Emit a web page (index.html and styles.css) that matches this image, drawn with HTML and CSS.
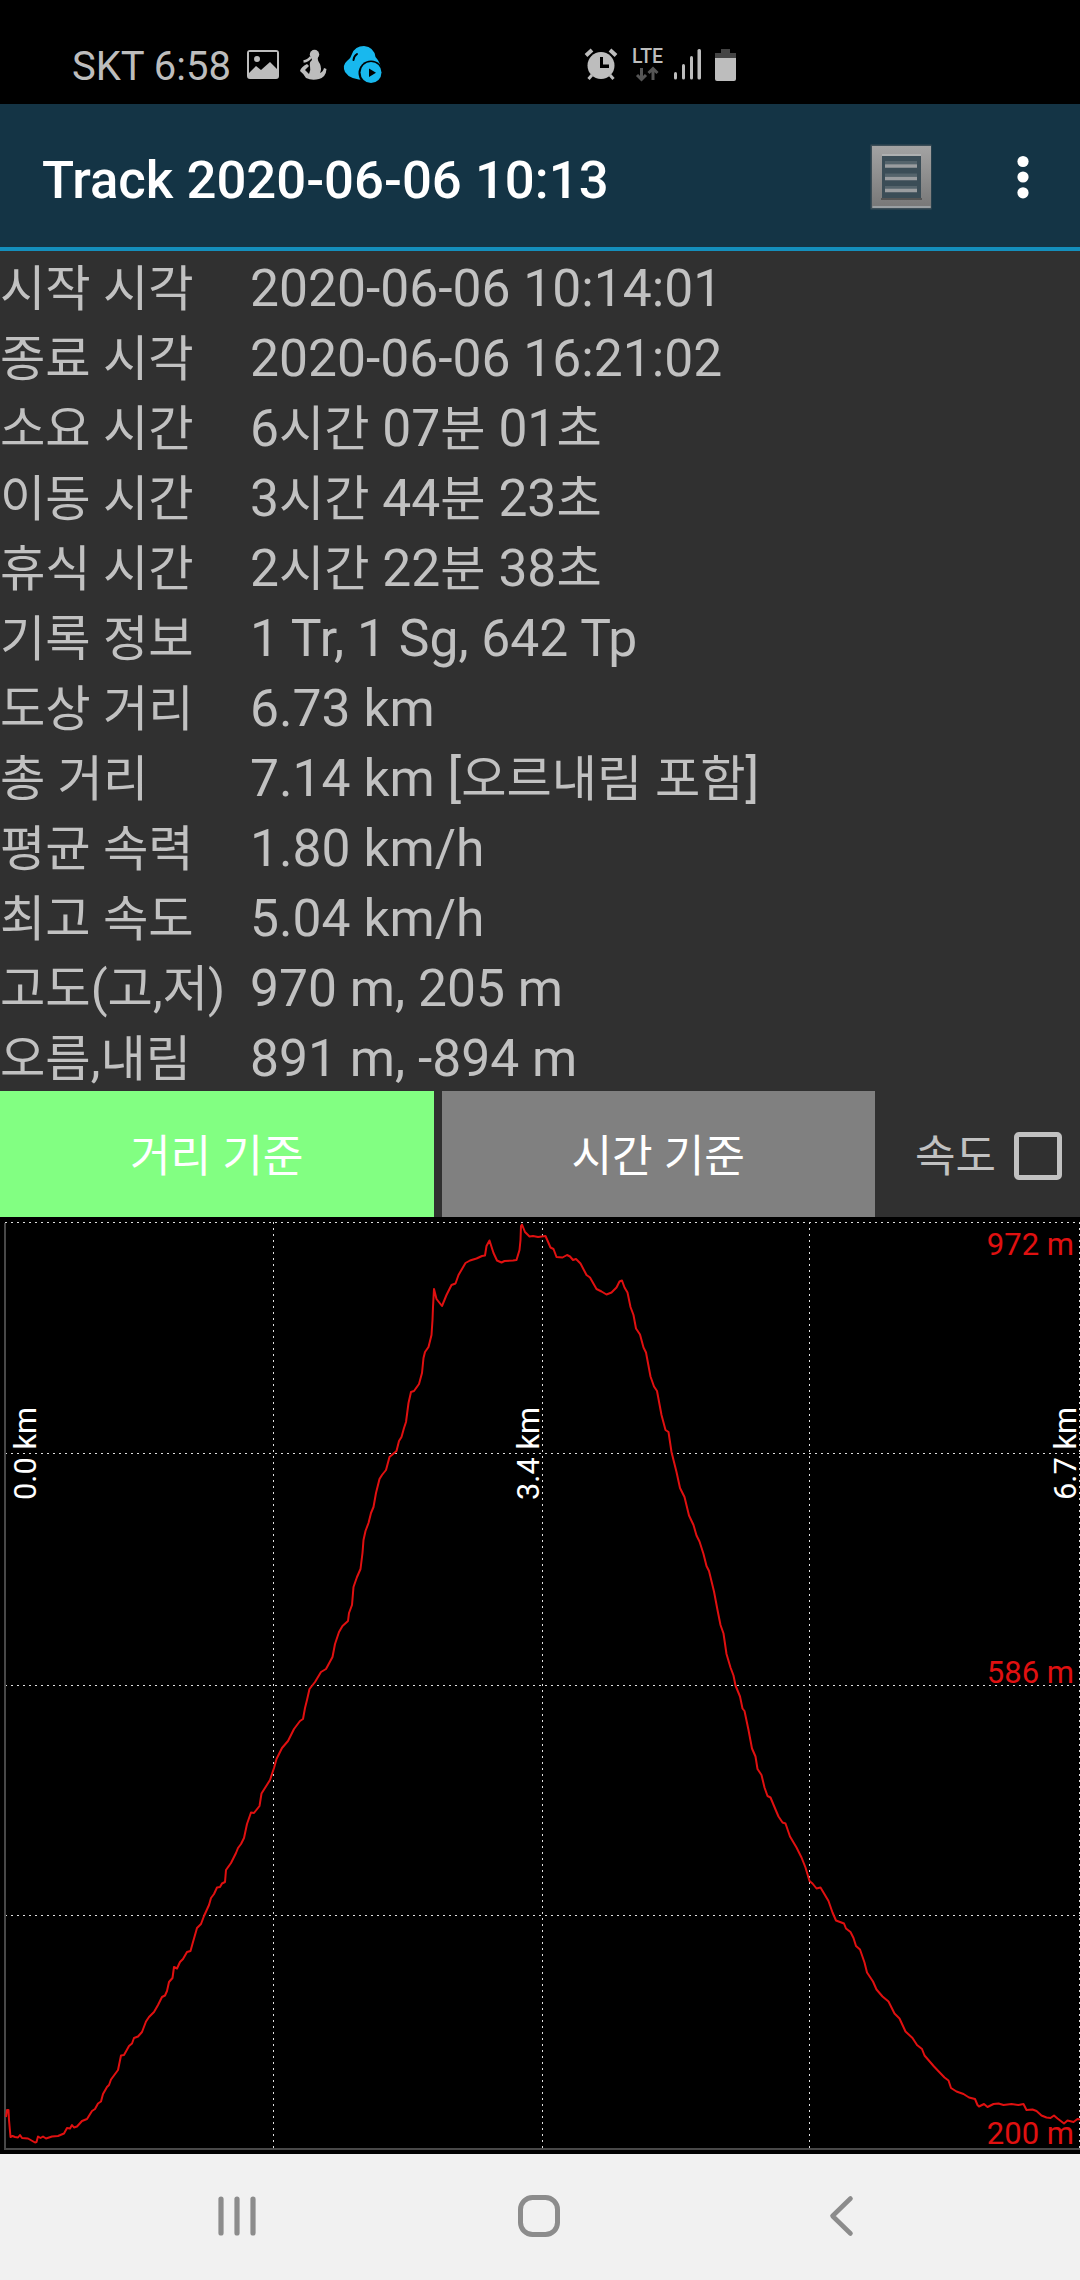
FILE: index.html
```html
<!DOCTYPE html>
<html lang="ko">
<head>
<meta charset="utf-8">
<title>Track 2020-06-06 10:13</title>
<link rel="stylesheet" href="styles.css">
</head>
<body>
<div class="screen">
  <header class="status">
    <span class="carrier">SKT 6:58</span>
    <svg class="notices" viewBox="244 44 140 42" width="140" height="42">
      <path fill="#bdbdbd" fill-rule="evenodd" d="M250 50H276Q279 50 279 53V76Q279 79 276 79H250Q247 79 247 76V53Q247 50 250 50ZM249 52V73L256 66L261 70L270 62L277 69V52ZM257 56A3 3 0 1 1 257 62A3 3 0 0 1 257 56Z"/>
      <circle cx="314.500" cy="54.500" r="4.700" fill="#bdbdbd"/>
      <path fill="#bdbdbd" d="M311 57L318 57Q317 60 320 64Q322 69 320 73Q323 72 324 68L326.500 69Q326 77 319 79Q312 81 306 78Q304 74 300 71Q301 67 307 64L309 66L305 70L309 74Q311 70 310 66Q309 62 312 60Z"/>
      <path fill="none" stroke="#bdbdbd" stroke-width="2.600" d="M311 57Q308 61 303.500 61.500"/>
      <path fill="#18b8ee" d="M364 46Q374 47 375.500 57Q380 62 381 68Q376 80 366 80Q350 80 345 72Q342 65 347 61Q351 58 352 54Q355 46 364 46Z"/>
      <path fill="none" stroke="#000" stroke-width="2" stroke-linecap="round" d="M353.500 60Q354 56 357 54"/>
      <circle cx="371" cy="73" r="12.500" fill="#000"/>
      <circle cx="371" cy="72.500" r="10.500" fill="#18b8ee"/>
      <path d="M369 68.500L376 72.700L369 77Z"/>
    </svg>
    <svg class="signals" viewBox="584 44 154 42" width="154" height="42">
      <g fill="#bdbdbd">
        <circle cx="601" cy="65.500" r="13.500"/>
        <path d="M600 57H603V64.500H609V68H600Z" fill="#000"/>
        <path stroke="#bdbdbd" stroke-width="4" d="M586 55.500L592 50M610 50L616 55.500"/>
        <path stroke="#bdbdbd" stroke-width="3" d="M592 75L588.500 79M610 75L613.500 79"/>
        <text class="lte" x="632" y="63" textLength="31" lengthAdjust="spacingAndGlyphs">LTE</text>
        <g fill="none" stroke="#555" stroke-width="3"><path d="M641.500 68V79M637 75L641.500 79.500L646 75M653 80V69M648.500 73L653 68.500L657.500 73"/></g>
        <rect x="674" y="72" width="3" height="7.500" rx="1.500"/><rect x="682" y="64" width="3" height="15.500" rx="1.500"/><rect x="690" y="56" width="3" height="23.500" rx="1.500"/><rect x="697.500" y="49" width="3.500" height="30.500" rx="1.500"/>
        <path fill="#444" d="M721 49H730V53H736V58H715V53H721Z"/><path d="M715 58H736V79Q736 81 734 81H717Q715 81 715 79Z"/>
      </g>
    </svg>
  </header>

  <nav class="appbar">
    <h1 class="title">Track 2020-06-06 10:13</h1>
    <svg class="list-icon" viewBox="868 142 66 70" width="66" height="70">
      <defs><linearGradient id="metal" x1="0" y1="0" x2="0" y2="1"><stop offset="0" stop-color="#a3a3a3"/><stop offset="1" stop-color="#777"/></linearGradient></defs>
      <rect x="870.500" y="144.500" width="61" height="65" fill="#3b4d57"/>
      <path fill="url(#metal)" fill-rule="evenodd" d="M872 146H931V208H872ZM882 156V198H921V156Z"/>
      <path d="M872.500 207H930.500" stroke="#a4adb1" stroke-width="1.500"/>
      <path d="M881 199H922" stroke="#555" stroke-width="2"/>
      <path d="M882 155H921" stroke="#c0c3c4" stroke-width="1"/>
      <path d="M885 162.500H917M885 175H917M885 187.500H917" stroke="#55646c" stroke-width="3"/>
      <path d="M885 166H917M885 178.500H917M885 190.500H917" stroke="#9a9da0" stroke-width="3.500"/>
    </svg>
    <svg class="more" viewBox="0 0 12 44" width="12" height="44"><g fill="#fff"><circle cx="6" cy="6.500" r="5.600"/><circle cx="6" cy="22" r="5.600"/><circle cx="6" cy="37.800" r="5.600"/></g></svg>
  </nav>

  <dl class="stats">
    <div class="row"><dt>시작 시각</dt><dd>2020-06-06 10:14:01</dd></div>
    <div class="row"><dt>종료 시각</dt><dd>2020-06-06 16:21:02</dd></div>
    <div class="row"><dt>소요 시간</dt><dd>6<span class="ko">시간</span> 07<span class="ko">분</span> 01<span class="ko">초</span></dd></div>
    <div class="row"><dt>이동 시간</dt><dd>3<span class="ko">시간</span> 44<span class="ko">분</span> 23<span class="ko">초</span></dd></div>
    <div class="row"><dt>휴식 시간</dt><dd>2<span class="ko">시간</span> 22<span class="ko">분</span> 38<span class="ko">초</span></dd></div>
    <div class="row"><dt>기록 정보</dt><dd>1 Tr, 1 Sg, 642 Tp</dd></div>
    <div class="row"><dt>도상 거리</dt><dd>6.73 km</dd></div>
    <div class="row"><dt>총 거리</dt><dd>7.14 km [<span class="ko">오르내림</span> <span class="ko">포함</span>]</dd></div>
    <div class="row"><dt>평균 속력</dt><dd>1.80 km/h</dd></div>
    <div class="row"><dt>최고 속도</dt><dd>5.04 km/h</dd></div>
    <div class="row"><dt>고도(고,저)</dt><dd>970 m, 205 m</dd></div>
    <div class="row"><dt>오름,내림</dt><dd>891 m, -894 m</dd></div>
  </dl>

  <div class="controls">
    <button class="mode mode-active">거리 기준</button>
    <button class="mode">시간 기준</button>
    <label class="speed"><span class="speed-text">속도</span><span class="box"></span></label>
  </div>

  <svg class="chart" viewBox="0 1217 1080 937" width="1080" height="937">
    <g class="grid">
      <path d="M5 1222.500H1080M5 1453.500H1080M5 1685.500H1080M5 1915.500H1080"/>
      <path d="M273.500 1222V2148M542.500 1222V2148M809.500 1222V2148M1079.500 1222V2148"/>
    </g>
    <path class="axis" d="M5 1223V2149H1080"/>
    <polyline class="profile" points="6,2117 7,2110 8.500,2110 9,2120 10.500,2137 12.500,2136 15,2137 18,2137.500 20,2135 22,2138 28,2138.500 35,2142.500 36.500,2142 38,2136.500 40.500,2138 43,2136.500 46,2138.500 52,2136.500 58,2136 64,2133.500 67,2128 70,2128.500 72,2125 74,2127.500 77,2126.500 82,2121 87,2119 92,2111 95,2109 98,2103.500 101,2101.500 103,2094 107,2087 109,2085 111,2079.500 118,2070 121,2055.500 124,2055 129,2046 132,2043.500 134,2038 138,2036.500 142,2032 146,2021.500 149,2017 154,2012 158,2005 162,1997 165,1995.500 167,1991 169,1982 172.500,1978 174,1967 177,1968.500 180,1962 183,1959 187,1952 190.500,1951 193,1942 197,1928 201,1924 204,1916 209,1905 211,1898 214,1894 217,1887.500 220,1887 222,1883.500 225,1882 226,1870 231,1863 236,1853 238,1848 241,1844 244,1838 247,1824 251,1812.500 254,1813 259.500,1806 261.500,1793.500 270,1780 274,1768 276.500,1759 282,1748 288,1741 294,1729 300,1721 303,1719 305,1708 307,1700 309.500,1689 315,1682 321,1672 326,1669 332.500,1657 335,1644 339,1632 342.500,1626 348,1621 349,1613 352,1605 353.500,1587 357,1577 360.500,1569 362.500,1553 363.500,1540 365.500,1531 368.500,1523 371,1513 373.500,1507 376,1493 379.500,1479 382,1475 386,1470 389.500,1457 396.500,1451 399,1441 401.500,1437 404,1428 406,1422 408.500,1403 411,1392 414,1391 419,1384 422,1373 423.500,1358 425,1352 428.500,1347 431.500,1335 432.500,1320 433,1307 434,1289 436.500,1299 442,1306 446.500,1295 451.500,1285 455.500,1283.500 458.500,1275 465.500,1263 470,1260.500 476.500,1258.500 482,1256 485,1255.500 486.500,1246 489.500,1240.500 493.500,1253 497,1260.500 501.500,1262.500 504.500,1261 513,1260.500 516.500,1260 519.500,1250 520.500,1240 521,1226 522,1224.500 525,1232 529.500,1236.500 533,1236 538,1237 545.500,1236 550.500,1247.500 553.500,1249 556.500,1257 562.500,1257.500 567,1255 570,1256.500 573,1260 576,1259 580.500,1263.500 586.500,1275 590,1277.500 596.500,1289 601.500,1291.500 606.500,1294.500 611.500,1292.500 616.500,1287.500 619.500,1281.500 622,1280.500 624.500,1287.500 627.500,1292.500 630.500,1307 633.500,1315 636,1328.500 640,1334.500 643.500,1347.500 646,1352.500 650.500,1376.500 654,1386.500 657,1391 661.500,1415 665.500,1430 668.500,1432 671.500,1452 676.500,1472 680,1488 684.500,1497 689,1515.500 693.500,1525 696.500,1535.500 699.500,1541.500 703.500,1554 706.500,1566 709,1571 714,1591.500 717.500,1610 720.500,1625 723.500,1633.500 726.500,1654 730.500,1667.500 733.500,1675.500 735.500,1685.500 740,1696.500 742.500,1708.500 744.500,1711 748.500,1730 752,1748.500 755.500,1756.500 757.500,1769 761.500,1775 764.500,1787.500 767.500,1796 770.500,1797.500 775.500,1809.500 778.500,1816.500 782.500,1822.500 785.500,1823.500 790,1836.500 796.500,1847.500 801.500,1857.500 805.500,1867.500 809.500,1881 812.500,1883.500 816.500,1888.500 820.500,1887.500 828.500,1901 832.500,1912.500 836,1920.500 844,1923.500 846,1928.500 850.500,1932 853.500,1938 856,1946 860,1949.500 864.500,1962.500 867,1972.500 873,1981.500 876.500,1989.500 882.500,1996.500 888.500,2001.500 894.500,2013.500 899.500,2018.500 905.500,2031.500 912.500,2038 917,2045 922,2049 924.500,2055.500 934,2066.500 944.500,2077.500 948.500,2080.500 951,2088 956.500,2091.500 963.500,2094 969,2097.500 975,2099 977.500,2105 979,2106.500 984,2104 987.500,2107 993.500,2104 998.500,2103.500 1003.500,2105 1011.500,2104 1018.500,2105 1023.500,2104 1026.500,2110 1032.500,2109.500 1036.500,2111 1041.500,2115.500 1046.500,2117.500 1050.500,2118 1054,2115.500 1057.500,2118.500 1064,2123.500 1067.500,2120.500 1073.500,2122 1077.500,2119 1080,2119.500"/>
    <g class="alt"><text x="1074" y="1255">972 m</text><text x="1074" y="1683">586 m</text><text x="1074" y="2144">200 m</text></g>
    <g class="dist"><text transform="translate(36 1500) rotate(-90)">0.0 km</text><text transform="translate(539 1500) rotate(-90)">3.4 km</text><text transform="translate(1076 1500) rotate(-90)">6.7 km</text></g>
  </svg>

  <footer class="navbar">
    <svg viewBox="0 0 44 44" width="44" height="44"><path d="M7 5V39M23 5V39M39 5V39" stroke-width="5.200"/></svg>
    <svg viewBox="0 0 44 44" width="44" height="44"><rect x="3.500" y="3.500" width="37" height="37" rx="12" stroke-width="5"/></svg>
    <svg viewBox="0 0 44 44" width="44" height="44"><path d="M30.500 4.500L12.500 22L30.500 39.500" stroke-width="4.600"/></svg>
  </footer>
</div>
</body>
</html>
```

FILE: styles.css
```css
* { box-sizing: border-box; }
body { margin: 0; background: #000; font-family: Roboto, "Noto Sans CJK KR", sans-serif; }
.screen { width: 1080px; height: 2280px; display: flex; flex-direction: column; background: #303030; overflow: hidden; }

.status { height: 104px; padding: 26px 342px 0 72px; display: flex; align-items: center; background: #000; }
.carrier { width: 172px; padding-top: 4px; color: #bdbdbd; font-size: 40px; line-height: 42px; white-space: nowrap; }
.signals { margin-left: auto; }
.lte { font: 500 21px Roboto, sans-serif; }

.appbar { height: 147px; padding: 0 51px 0 42px; display: flex; align-items: center; background: #143445; border-bottom: 4px solid #148fbd; }
.title { flex: 1; margin: 8px 0 0; color: #fff; font-size: 52.700px; line-height: 62px; font-weight: 500; white-space: nowrap; }
.list-icon { margin: 2px 83px 0 0; }
.more { margin-top: 3px; }

.stats { margin: 0; color: #c1c1c1; }
.row { height: 70px; padding-top: 6px; display: grid; grid-template-columns: 250px 1fr; align-items: baseline; line-height: 64px; white-space: nowrap; }
dt { font-size: 49.300px; }
dd { margin: 0; font-size: 51.600px; }
.ko { font-size: 49.200px; line-height: 1; }

.controls { height: 126px; display: flex; gap: 8px; }
.mode { width: 433.500px; padding: 5px 0 0; border: 0; background: #808080; color: #fff; font: 44.200px/60px Roboto, "Noto Sans CJK KR", sans-serif; }
.mode-active { background: #82ff82; }
.speed { flex: 1; padding: 3px 18px 0 0; display: flex; align-items: center; justify-content: flex-end; gap: 18px; color: #c1c1c1; font-size: 44px; }
.speed-text { padding-top: 3px; line-height: 60px; }
.box { width: 48px; height: 48px; border: 5px solid #c1c1c1; border-radius: 5px; }

.chart { display: block; background: #000; }
.grid { fill: none; stroke: #e0e0e0; stroke-width: 1; stroke-dasharray: 2 4; }
.axis { fill: none; stroke: #484848; stroke-width: 2; }
.profile { fill: none; stroke: #e01010; stroke-width: 2; stroke-linejoin: round; }
.alt { fill: #e01010; font-size: 31px; text-anchor: end; }
.dist { fill: #fff; font-size: 30.800px; }

.navbar { flex: 1; padding: 0 216px 2px 214px; display: flex; justify-content: space-between; align-items: center; background: #f1f1f1; }
.navbar svg { fill: none; stroke: #8c8c8c; stroke-linecap: round; stroke-linejoin: round; }
```
